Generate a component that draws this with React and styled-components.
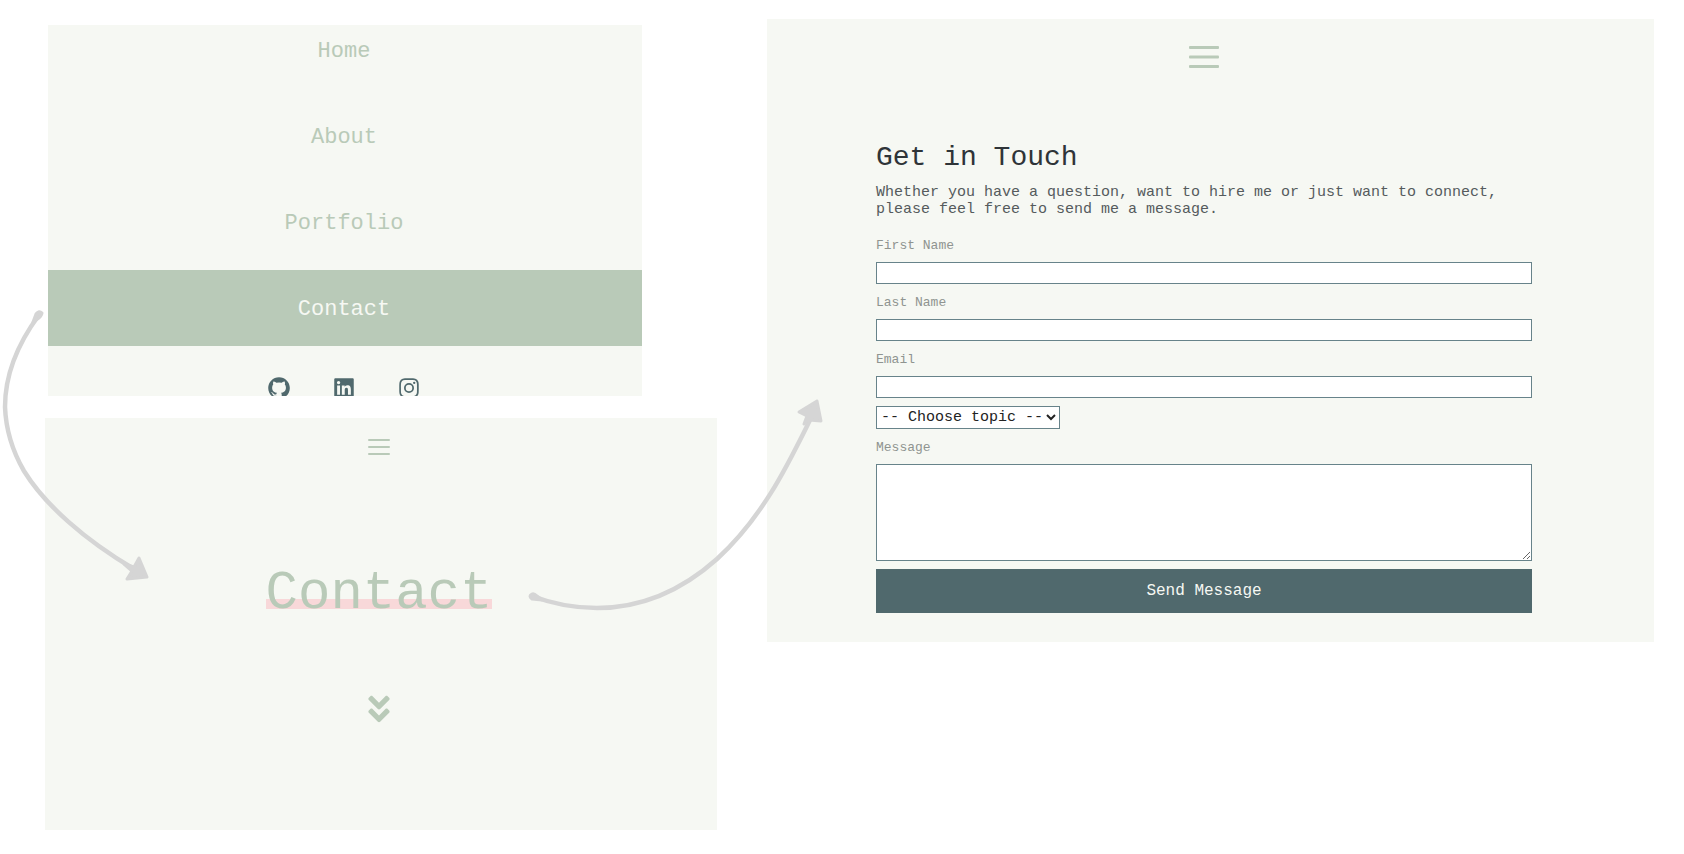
import React from "react";
import styled, { createGlobalStyle } from "styled-components";
import { BiLogoGithub, BiLogoLinkedinSquare, BiLogoInstagram } from "react-icons/bi";
import { FaAngleDoubleDown } from "react-icons/fa";

const color = {
  paper: "#f6f8f3",
  sage: "#b9cab8",
  slate: "#50696d",
  outline: "#67838a",
  blush: "#f8d8d9",
  ink: "#2f3438",
  text: "#555b5d",
  label: "#8f9490",
  arrow: "#d5d5d5",
};

const GlobalStyle = createGlobalStyle`
  *, *::before, *::after { box-sizing: border-box; }
  body {
    margin: 0;
    background: #fff;
    color: ${color.text};
    font-family: "Liberation Mono", "Courier New", monospace;
  }
`;

const Page = styled.main`
  position: relative;
  display: grid;
  grid-template-columns: 672fr 887fr;
  column-gap: 50px;
  align-items: start;
  padding: 19px 30px 24px 45px;
`;

const LeftColumn = styled.div`
  display: flex;
  flex-direction: column;
  gap: 22px;
  padding-top: 6px;
`;

const MenuPanel = styled.section`
  height: 371px;
  margin: 0 75px 0 3px;
  overflow: hidden;
  background: ${color.paper};
`;

const MenuList = styled.ul`
  display: flex;
  flex-direction: column;
  gap: 10px;
  margin: -13px 0 0;
  padding: 0;
  list-style: none;
`;

const MenuLink = styled.a`
  display: block;
  padding: 26px 2px 22px 0;
  background: ${(p) => (p.$active ? color.sage : "transparent")};
  color: ${(p) => (p.$active ? color.paper : color.sage)};
  font-size: 22px;
  line-height: 28px;
  text-align: center;
  text-decoration: none;
`;

const SocialRow = styled.div`
  display: flex;
  justify-content: center;
  gap: 39px;
  padding: 29px 2px 0 0;
`;

const SocialLink = styled.a`
  display: flex;
  color: ${color.slate};
  font-size: 26px;
`;

const HeroPanel = styled.section`
  display: flex;
  flex-direction: column;
  align-items: center;
  min-height: 412px;
  padding: 21px 4px 0 0;
  background: ${color.paper};
`;

const HeroTitle = styled.h1`
  margin: 108px 0 67px;
  background: linear-gradient(
    transparent 36px,
    ${color.blush} 36px,
    ${color.blush} 46px,
    transparent 46px
  );
  color: ${color.sage};
  font-size: 54px;
  font-weight: 400;
  line-height: 62px;
`;

const IconButton = styled.button`
  display: flex;
  padding: 0;
  border: 0;
  background: none;
  color: ${color.sage};
  font-size: 34px;
  cursor: pointer;
`;

const FormPanel = styled.section`
  display: flex;
  flex-direction: column;
  align-items: center;
  padding: 27px 122px 29px 109px;
  background: ${color.paper};
`;

const Form = styled.form`
  display: flex;
  flex-direction: column;
  width: 100%;
  margin-top: 72px;
`;

const FormTitle = styled.h2`
  margin: 0 0 8px;
  color: ${color.ink};
  font-size: 28px;
  font-weight: 400;
  line-height: 36px;
`;

const Intro = styled.p`
  margin: 0 0 9px;
  font-size: 15px;
  line-height: 17px;
`;

const Field = styled.div`
  display: flex;
  flex-direction: column;
  gap: 8px;
  margin-top: 11px;
`;

const Label = styled.label`
  color: ${color.label};
  font-size: 13px;
  line-height: 16px;
`;

const TextInput = styled.input`
  width: 100%;
  height: 22px;
  padding: 0 4px;
  border: 1px solid ${color.outline};
  border-radius: 0;
  background: #fff;
  font: inherit;
  font-size: 15px;
`;

const TopicSelect = styled.select`
  align-self: flex-start;
  width: 184px;
  height: 23px;
  margin-top: 8px;
  padding: 0;
  border: 1px solid ${color.outline};
  border-radius: 0;
  background: #fff;
  color: #222;
  font: inherit;
  font-size: 15px;
`;

const MessageBox = styled.textarea`
  width: 100%;
  height: 97px;
  padding: 4px;
  border: 1px solid ${color.outline};
  border-radius: 0;
  background: #fff;
  font: inherit;
  font-size: 15px;
`;

const SendButton = styled.button`
  height: 44px;
  margin-top: 8px;
  border: 0;
  background: ${color.slate};
  color: ${color.paper};
  font: inherit;
  font-size: 16px;
  cursor: pointer;
`;

const FlowArrows = styled.svg`
  position: absolute;
  top: 0;
  left: 0;
  width: 100%;
  pointer-events: none;
`;

function MenuIcon({ width, height, bar }) {
  const middle = (height - bar) / 2;
  return (
    <svg width={width} height={height} fill="currentColor" aria-hidden="true">
      {[0, middle, height - bar].map((y) => (
        <rect key={y} y={y} width={width} height={bar} rx="1" />
      ))}
    </svg>
  );
}

const menuItems = ["Home", "About", "Portfolio", "Contact"];

const socials = [
  { name: "GitHub", Icon: BiLogoGithub },
  { name: "LinkedIn", Icon: BiLogoLinkedinSquare },
  { name: "Instagram", Icon: BiLogoInstagram },
];

const nameFields = [
  { id: "first-name", label: "First Name", type: "text" },
  { id: "last-name", label: "Last Name", type: "text" },
  { id: "email", label: "Email", type: "email" },
];

export default function App() {
  return (
    <>
      <GlobalStyle />
      <Page>
        <LeftColumn>
          <MenuPanel>
            <nav>
              <MenuList>
                {menuItems.map((item) => (
                  <li key={item}>
                    <MenuLink href={`#${item.toLowerCase()}`} $active={item === "Contact"}>
                      {item}
                    </MenuLink>
                  </li>
                ))}
              </MenuList>
            </nav>
            <SocialRow>
              {socials.map(({ name, Icon }) => (
                <SocialLink key={name} href={`#${name.toLowerCase()}`} aria-label={name}>
                  <Icon />
                </SocialLink>
              ))}
            </SocialRow>
          </MenuPanel>

          <HeroPanel id="contact">
            <IconButton type="button" aria-label="Open menu">
              <MenuIcon width={22} height={16} bar={2} />
            </IconButton>
            <HeroTitle>Contact</HeroTitle>
            <IconButton type="button" aria-label="Scroll down">
              <FaAngleDoubleDown />
            </IconButton>
          </HeroPanel>
        </LeftColumn>

        <FormPanel>
          <IconButton type="button" aria-label="Open menu">
            <MenuIcon width={30} height={22} bar={3} />
          </IconButton>
          <Form onSubmit={(e) => e.preventDefault()}>
            <FormTitle>Get in Touch</FormTitle>
            <Intro>
              Whether you have a question, want to hire me or just want to connect, please feel
              free to send me a message.
            </Intro>
            {nameFields.map(({ id, label, type }) => (
              <Field key={id}>
                <Label htmlFor={id}>{label}</Label>
                <TextInput id={id} type={type} />
              </Field>
            ))}
            <TopicSelect aria-label="Topic" defaultValue="">
              <option value="">-- Choose topic --</option>
            </TopicSelect>
            <Field>
              <Label htmlFor="message">Message</Label>
              <MessageBox id="message" />
            </Field>
            <SendButton type="submit">Send Message</SendButton>
          </Form>
        </FormPanel>

        <FlowArrows viewBox="0 0 1684 854" fill="none" stroke={color.arrow} aria-hidden="true">
          <g strokeWidth="4.5" strokeLinecap="round" strokeLinejoin="round">
            <path d="M39 315C22 338 5 370 5 407C6 433 13 452 24 471C45 505 85 540 134 569" />
            <path d="M532 596C553 604 575 608 597 608C640 608 680 592 717 559C765 515 790 460 812 416" />
          </g>
          <g fill={color.arrow} strokeWidth="3" strokeLinejoin="round">
            <path d="M139 558L147 577L127 579L132 571L124 564L134 567Z" />
            <path d="M817 401L799 412L807 416L804 424L809 420L821 421Z" />
            <path d="M42 313Q39 310 36 314L33 322L39 318Q42 315 42 313Z" />
            <path d="M532 594Q528 596 532 599L542 600L537 596Q534 593 532 594Z" />
          </g>
        </FlowArrows>
      </Page>
    </>
  );
}
